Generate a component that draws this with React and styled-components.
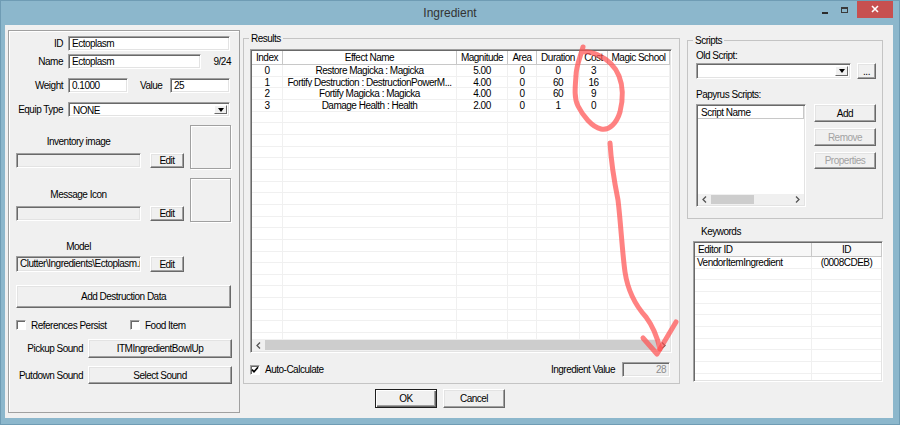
import React from 'react';
import styled, { createGlobalStyle, css } from 'styled-components';

const UI_FONT = '"Liberation Sans", Arial, sans-serif';

const GlobalStyle = createGlobalStyle`
  html, body { margin: 0; padding: 0; }
  body {
    background: #8db8cd;
    font-family: ${UI_FONT};
    font-size: 10px;
    letter-spacing: -0.5px;
    color: #000;
  }
  *, *::before, *::after { box-sizing: border-box; }
`;

const Window = styled.div`
  position: relative;
  width: 900px;
  height: 425px;
  background: #8cb7cc;
  border: 1px solid #6f9cb4;
  display: flex;
  flex-direction: column;
  overflow: hidden;
`;

const TitleBar = styled.div`
  height: 24px;
  flex: none;
  display: grid;
  grid-template-columns: 1fr auto 1fr;
`;

const Title = styled.div`
  grid-column: 2;
  font-family: "Liberation Sans", Arial, sans-serif;
  font-size: 12px;
  letter-spacing: 0;
  line-height: 24px;
  color: #333;
`;

const Controls = styled.div`
  grid-column: 3;
  justify-self: end;
  display: flex;
  align-items: flex-start;
  margin-right: 6px;
`;

const MinGlyph = styled.span`
  width: 6px;
  height: 2px;
  background: #2b2b2b;
  margin-top: 11px;
  margin-right: 13px;
`;

const MaxGlyph = styled.span`
  width: 7px;
  height: 6px;
  border: 1px solid #3a3a3a;
  border-top-width: 2px;
  margin-top: 6px;
  margin-right: 9px;
`;

const CloseBtn = styled.div`
  width: 36px;
  height: 18px;
  margin-top: -1px;
  background: #c75050;
  display: flex;
  align-items: center;
  justify-content: center;
`;

const Client = styled.div`
  flex: 1;
  margin: 0 6px 6px 4px;
  background: #f0f0f0;
  display: flex;
  align-items: flex-start;
`;

/* ---------- generic controls ---------- */

const sunken = css`
  border: 1px solid;
  border-color: #a0a0a0 #fff #fff #a0a0a0;
  box-shadow: inset 1px 1px 0 #696969, inset -1px -1px 0 #e3e3e3;
`;

const TextBox = styled.div`
  ${sunken};
  width: ${p => p.$w}px;
  height: ${p => p.$h || 15}px;
  background: ${p => (p.$readOnly ? '#f0f0f0' : '#fff')};
  color: ${p => (p.$disabled ? '#8d8d8d' : '#000')};
  padding: 0 3px 0 3px;
  line-height: ${p => (p.$h || 15) - 2}px;
  text-align: ${p => p.$align || 'left'};
  white-space: nowrap;
  overflow: hidden;
  flex: none;
`;

const Combo = styled.div`
  ${sunken};
  width: ${p => p.$w}px;
  height: ${p => p.$h || 15}px;
  background: #fff;
  display: flex;
  align-items: stretch;
  padding: 2px 2px 2px 3px;
  flex: none;
`;

const ComboText = styled.div`
  flex: 1;
  line-height: ${p => p.$lh || 11}px;
  padding-left: 1px;
`;

const ComboArrow = styled.div`
  width: 13px;
  background: #f0f0f0;
  border: 1px solid;
  border-color: #fff #696969 #696969 #fff;
  display: flex;
  align-items: center;
  justify-content: center;
  &::after {
    content: '';
    border-left: 3.5px solid transparent;
    border-right: 3.5px solid transparent;
    border-top: 4px solid #000;
  }
`;

const Button = styled.button`
  width: ${p => (p.$w ? p.$w + 'px' : '100%')};
  height: ${p => p.$h || 19}px;
  margin: 0;
  padding: 0;
  flex: none;
  font-family: ${UI_FONT};
  font-size: 10px;
  letter-spacing: -0.5px;
  color: ${p => (p.disabled ? '#a3a3a3' : '#000')};
  background: #f0f0f0;
  border: 1px solid;
  border-color: #fff #696969 #696969 #fff;
  box-shadow: inset -1px -1px 0 #a0a0a0, inset 1px 1px 0 #e3e3e3;
  display: flex;
  align-items: center;
  justify-content: center;
  white-space: nowrap;
  ${p =>
    p.$default &&
    css`
      border-color: #1e1e1e;
      box-shadow: inset 1px 1px 0 #fff, inset -1px -1px 0 #696969, inset -2px -2px 0 #a0a0a0;
    `}
`;

const CheckBox = styled.span`
  width: 10px;
  height: 10px;
  flex: none;
  background: #fff;
  border: 1px solid;
  border-color: #a0a0a0 #fff #fff #a0a0a0;
  box-shadow: inset 1px 1px 0 #696969;
  display: flex;
  align-items: center;
  justify-content: center;
`;

const Check = ({ checked }) => (
  <CheckBox>
    {checked && (
      <svg width="8" height="8" viewBox="0 0 8 8">
        <path d="M1 3.6 L3 5.8 L7 1.2" fill="none" stroke="#000" strokeWidth="1.6" />
      </svg>
    )}
  </CheckBox>
);

/* ---------- left panel ---------- */

const LeftPanel = styled.div`
  margin: 5px 0 0 3px;
  width: 232px;
  height: 383px;
  flex: none;
  border: 1px solid #a0a0a0;
  box-shadow: inset 1px 1px 0 #fff;
  padding: 0 8px 0 7px;
  display: flex;
  flex-direction: column;
`;

const FormRow = styled.div`
  display: flex;
  align-items: center;
  margin-top: ${p => p.$top || 0}px;
  height: ${p => p.$h || 15}px;
  flex: none;
`;

const RowLabel = styled.span`
  width: ${p => p.$w || 47}px;
  margin-right: 5px;
  text-align: right;
  white-space: nowrap;
  flex: none;
`;

const InlineLabel = styled.span`
  width: ${p => p.$w}px;
  margin-left: ${p => p.$ml || 0}px;
  white-space: nowrap;
  flex: none;
`;

const Counter = styled.span`
  margin-left: auto;
`;

const ImageBlock = styled.div`
  display: flex;
  align-items: flex-end;
  margin-top: ${p => p.$top}px;
  flex: none;
`;

const ImageFieldCol = styled.div`
  width: 168px;
  display: flex;
  flex-direction: column;
  padding-bottom: 1px;
`;

const CenterLabel = styled.div`
  width: 125px;
  text-align: center;
  line-height: 12px;
  margin-bottom: ${p => p.$mb}px;
  white-space: nowrap;
`;

const FieldEditRow = styled.div`
  display: flex;
  align-items: center;
  gap: 9px;
`;

const ImageBox = styled.div`
  width: 41px;
  height: 44px;
  margin-left: 6px;
  border: 1px solid #a0a0a0;
  box-shadow: inset 1px 1px 0 #fff, 1px 1px 0 #fff;
  flex: none;
`;

const ModelBlock = styled.div`
  margin-top: 19px;
  display: flex;
  flex-direction: column;
`;

const WideButtonWrap = styled.div`
  margin-top: 13px;
`;

const CheckItem = styled.label`
  display: flex;
  align-items: center;
  gap: 5px;
  width: ${p => (p.$w ? p.$w + 'px' : 'auto')};
  white-space: nowrap;
`;

/* ---------- middle (results) ---------- */

const MiddleCol = styled.div`
  margin: 13px 0 0 3px;
  width: 437px;
  flex: none;
  display: flex;
  flex-direction: column;
`;

const GroupBox = styled.div`
  position: relative;
  border: 1px solid #c4c4c4;
  height: ${p => p.$h}px;
  padding: ${p => p.$pad};
  flex: none;
`;

const Legend = styled.span`
  position: absolute;
  top: -7px;
  left: 5px;
  padding: 0 2px;
  background: #f0f0f0;
  line-height: 13px;
`;

const ListView = styled.div`
  ${sunken};
  width: ${p => p.$w}px;
  height: ${p => p.$h}px;
  background: #fff;
  padding: 1px;
  display: flex;
  flex-direction: column;
  overflow: hidden;
  flex: none;
`;

const ListHeader = styled.div`
  display: grid;
  grid-template-columns: ${p => p.$cols};
  height: ${p => p.$h || 14}px;
  flex: none;
  background: ${p => p.$bg || '#fff'};
`;

const HeaderCell = styled.div`
  border-right: 1px solid #c8c8c8;
  border-bottom: 1px solid #c8c8c8;
  text-align: ${p => p.$align || 'center'};
  padding-left: ${p => (p.$align === 'left' ? 3 : 0)}px;
  line-height: 13px;
  white-space: nowrap;
  overflow: hidden;
`;

const ListBody = styled.div`
  flex: 1;
  overflow: hidden;
`;

const ListRow = styled.div`
  display: grid;
  grid-template-columns: ${p => p.$cols};
  height: 11.67px;
`;

const Cell = styled.div`
  border-right: 1px solid #f0f0f0;
  border-bottom: 1px solid #f0f0f0;
  text-align: ${p => p.$align || 'center'};
  padding-left: ${p => (p.$align === 'left' ? 2 : 0)}px;
  line-height: 12px;
  white-space: nowrap;
  overflow: hidden;
`;

const HScroll = styled.div`
  height: ${p => p.$h || 12}px;
  flex: none;
  display: flex;
  align-items: stretch;
  background: #f0f0f0;
`;

const ScrollArrow = styled.div`
  width: 13px;
  flex: none;
  display: flex;
  align-items: center;
  justify-content: center;
`;

const Thumb = styled.div`
  flex: ${p => (p.$w ? 'none' : 1)};
  width: ${p => (p.$w ? p.$w + 'px' : 'auto')};
  background: #cdcdcd;
  margin: 1px 0;
`;

const ScrollGap = styled.div`
  flex: 1;
`;

const Chevron = ({ dir }) => (
  <svg width="5" height="7" viewBox="0 0 5 7">
    <path
      d={dir === 'left' ? 'M4 0.5 L1 3.5 L4 6.5' : 'M1 0.5 L4 3.5 L1 6.5'}
      fill="none"
      stroke="#555"
      strokeWidth="1.3"
    />
  </svg>
);

const GroupFooter = styled.div`
  display: flex;
  align-items: center;
  height: 15px;
  margin-top: 9px;
  padding-right: 2px;
`;

const FooterLabel = styled.span`
  margin-left: auto;
  margin-right: 7px;
`;

const ButtonRow = styled.div`
  display: flex;
  gap: 6px;
  margin: 5px 0 0 132px;
`;

/* ---------- right column ---------- */

const RightCol = styled.div`
  margin: 15px 0 0 7px;
  width: 196px;
  flex: none;
  display: flex;
  flex-direction: column;
`;

const PlainLabel = styled.div`
  line-height: 12px;
  height: 12px;
  margin-top: ${p => p.$top || 0}px;
  margin-left: ${p => p.$left || 0}px;
  white-space: nowrap;
`;

const ScriptRow = styled.div`
  display: flex;
  align-items: flex-start;
  margin-top: ${p => p.$top || 0}px;
  gap: ${p => p.$gap || 0}px;
`;

const SideButtons = styled.div`
  display: flex;
  flex-direction: column;
  gap: 6px;
  margin-left: 8px;
`;

const KeywordsWrap = styled.div`
  margin: 3px 0 0 6px;
`;

/* ---------- annotation overlay ---------- */

const Annotation = styled.svg`
  position: absolute;
  top: -1px;
  left: -1px;
  pointer-events: none;
`;

const RESULT_COLS = [31, 174, 51, 29, 43, 28, 62];
const resultTemplate = RESULT_COLS.map(c => c + 'px').join(' ');
const RESULT_HEAD = ['Index', 'Effect Name', 'Magnitude', 'Area', 'Duration', 'Cost', 'Magic School'];
const RESULTS = [
  ['0', 'Restore Magicka : Magicka', '5.00', '0', '0', '3', ''],
  ['1', 'Fortify Destruction : DestructionPowerM...', '4.00', '0', '60', '16', ''],
  ['2', 'Fortify Magicka : Magicka', '4.00', '0', '60', '9', ''],
  ['3', 'Damage Health : Health', '2.00', '0', '1', '0', ''],
];
const emptyRow = ['', '', '', '', '', '', ''];
const resultRows = [...RESULTS, ...Array.from({ length: 20 }, () => emptyRow)];

const KW_TEMPLATE = '117px 70px';
const kwRows = [['VendorItemIngredient', '(0008CDEB)'], ...Array.from({ length: 10 }, () => ['', ''])];

export default function App() {
  return (
    <>
      <GlobalStyle />
      <Window>
        <TitleBar>
          <Title>Ingredient</Title>
          <Controls>
            <MinGlyph />
            <MaxGlyph />
            <CloseBtn>
              <svg width="8" height="8" viewBox="0 0 8 8">
                <path d="M1 1 L7 7 M7 1 L1 7" stroke="#fff" strokeWidth="1.6" />
              </svg>
            </CloseBtn>
          </Controls>
        </TitleBar>

        <Client>
          <LeftPanel>
            <FormRow $top={5}>
              <RowLabel>ID</RowLabel>
              <TextBox $w={162}>Ectoplasm</TextBox>
            </FormRow>
            <FormRow $top={3}>
              <RowLabel>Name</RowLabel>
              <TextBox $w={133}>Ectoplasm</TextBox>
              <Counter>9/24</Counter>
            </FormRow>
            <FormRow $top={9}>
              <RowLabel>Weight</RowLabel>
              <TextBox $w={60}>0.1000</TextBox>
              <InlineLabel $w={30} $ml={12}>Value</InlineLabel>
              <TextBox $w={60}>25</TextBox>
            </FormRow>
            <FormRow $top={9}>
              <RowLabel>Equip Type</RowLabel>
              <Combo $w={162}>
                <ComboText>NONE</ComboText>
                <ComboArrow />
              </Combo>
            </FormRow>

            <ImageBlock $top={8}>
              <ImageFieldCol>
                <CenterLabel $mb={5}>Inventory image</CenterLabel>
                <FieldEditRow>
                  <TextBox $w={125} $readOnly />
                  <Button $w={34} $h={15}>Edit</Button>
                </FieldEditRow>
              </ImageFieldCol>
              <ImageBox />
            </ImageBlock>

            <ImageBlock $top={9}>
              <ImageFieldCol>
                <CenterLabel $mb={5}>Message Icon</CenterLabel>
                <FieldEditRow>
                  <TextBox $w={125} $readOnly />
                  <Button $w={34} $h={15}>Edit</Button>
                </FieldEditRow>
              </ImageFieldCol>
              <ImageBox />
            </ImageBlock>

            <ModelBlock>
              <CenterLabel $mb={3}>Model</CenterLabel>
              <FieldEditRow>
                <TextBox $w={125} $h={16} $readOnly>Clutter\Ingredients\Ectoplasm.nif</TextBox>
                <Button $w={34} $h={16}>Edit</Button>
              </FieldEditRow>
            </ModelBlock>

            <WideButtonWrap>
              <Button $h={23}>Add Destruction Data</Button>
            </WideButtonWrap>

            <FormRow $top={11} $h={12}>
              <CheckItem $w={114}>
                <Check />
                References Persist
              </CheckItem>
              <CheckItem>
                <Check />
                Food Item
              </CheckItem>
            </FormRow>

            <FormRow $top={8} $h={19}>
              <RowLabel $w={67}>Pickup Sound</RowLabel>
              <Button $w={144} $h={19}>ITMIngredientBowlUp</Button>
            </FormRow>
            <FormRow $top={8} $h={18}>
              <RowLabel $w={67}>Putdown Sound</RowLabel>
              <Button $w={144} $h={18}>Select Sound</Button>
            </FormRow>
          </LeftPanel>

          <MiddleCol>
            <GroupBox $h={346} $pad="10px 7px 0 6px">
              <Legend>Results</Legend>
              <ListView $w={422} $h={304}>
                <ListHeader $cols={resultTemplate}>
                  {RESULT_HEAD.map(h => (
                    <HeaderCell key={h}>{h}</HeaderCell>
                  ))}
                </ListHeader>
                <ListBody>
                  {resultRows.map((r, i) => (
                    <ListRow key={i} $cols={resultTemplate}>
                      {r.map((c, j) => (
                        <Cell key={j}>{c}</Cell>
                      ))}
                    </ListRow>
                  ))}
                </ListBody>
                <HScroll>
                  <ScrollArrow>
                    <Chevron dir="left" />
                  </ScrollArrow>
                  <Thumb />
                  <ScrollArrow>
                    <Chevron dir="right" />
                  </ScrollArrow>
                </HScroll>
              </ListView>
              <GroupFooter>
                <CheckItem>
                  <Check checked />
                  Auto-Calculate
                </CheckItem>
                <FooterLabel>Ingredient Value</FooterLabel>
                <TextBox $w={48} $readOnly $disabled $align="right">28</TextBox>
              </GroupFooter>
            </GroupBox>
            <ButtonRow>
              <Button $w={62} $h={19} $default>OK</Button>
              <Button $w={62} $h={19}>Cancel</Button>
            </ButtonRow>
          </MiddleCol>

          <RightCol>
            <GroupBox $h={179} $pad="9px 0 0 8px">
              <Legend>Scripts</Legend>
              <PlainLabel>Old Script:</PlainLabel>
              <ScriptRow $top={1} $gap={6}>
                <Combo $w={155} $h={16}>
                  <ComboText $lh={12} />
                  <ComboArrow />
                </Combo>
                <Button $w={19} $h={16}>...</Button>
              </ScriptRow>
              <PlainLabel $top={10}>Papyrus Scripts:</PlainLabel>
              <ScriptRow $top={3}>
                <ListView $w={110} $h={103}>
                  <ListHeader $cols="1fr" $h={13}>
                    <HeaderCell $align="left">Script Name</HeaderCell>
                  </ListHeader>
                  <ListBody />
                  <HScroll $h={11}>
                    <ScrollArrow>
                      <Chevron dir="left" />
                    </ScrollArrow>
                    <Thumb $w={43} />
                    <ScrollGap />
                    <ScrollArrow>
                      <Chevron dir="right" />
                    </ScrollArrow>
                  </HScroll>
                </ListView>
                <SideButtons>
                  <Button $w={62} $h={18}>Add</Button>
                  <Button $w={62} $h={18} disabled>Remove</Button>
                  <Button $w={62} $h={17} disabled>Properties</Button>
                </SideButtons>
              </ScriptRow>
            </GroupBox>

            <PlainLabel $top={7} $left={14}>Keywords</PlainLabel>
            <KeywordsWrap>
              <ListView $w={190} $h={141}>
                <ListHeader $cols={KW_TEMPLATE} $h={14} $bg="#f7f7f7">
                  <HeaderCell $align="left">Editor ID</HeaderCell>
                  <HeaderCell>ID</HeaderCell>
                </ListHeader>
                <ListBody>
                  {kwRows.map((r, i) => (
                    <ListRow key={i} $cols={KW_TEMPLATE}>
                      <Cell $align="left">{r[0]}</Cell>
                      <Cell>{r[1]}</Cell>
                    </ListRow>
                  ))}
                </ListBody>
              </ListView>
            </KeywordsWrap>
          </RightCol>
        </Client>

        <Annotation width="900" height="425" viewBox="0 0 900 425">
          <g fill="none" stroke="rgba(255,82,82,0.72)" strokeWidth="5" strokeLinecap="round" strokeLinejoin="round">
            <path d="M583 47 C580 58 576 66 576 76 C575 88 574 98 578 106 C583 116 592 127 601 129 C610 131 617 122 620 112 C623 100 623 86 619 76 C615 66 607 59 598 55 C592 52 587 51 582 52" />
            <path d="M610 143 C611 160 614 180 618 200 C621 225 622 250 625 272 C628 292 636 306 646 317 C652 325 657 336 660 349" />
            <path d="M643 338 L657 354 L676 322" />
          </g>
        </Annotation>
      </Window>
    </>
  );
}
